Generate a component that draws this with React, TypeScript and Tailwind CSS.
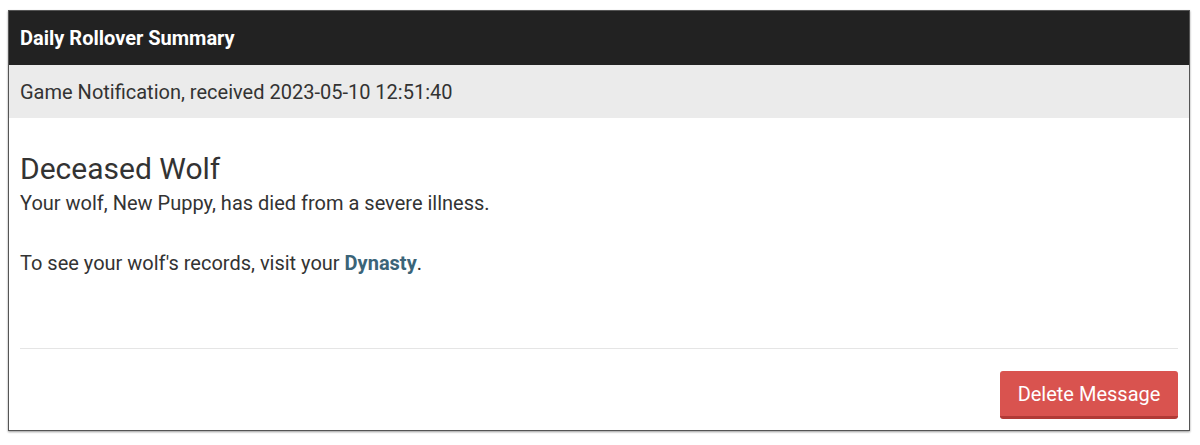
export default function App() {
  return (
    <div className="bg-white w-[1200px] h-[445px] pt-[10px] pl-[8px]" style={{ fontFamily: "Roboto, 'Liberation Sans', sans-serif" }}>
      <div className="w-[1182px] border border-[#555] shadow-[0_1px_2px_rgba(0,0,0,0.4)]">
        <div className="bg-[#222] h-[54px] flex items-center px-[11px] text-white font-bold text-[20px]">Daily Rollover Summary</div>
        <div className="bg-[#ebebeb] h-[53px] flex items-center px-[11px] text-[#333] text-[20px]">Game Notification, received 2023-05-10 12:51:40</div>
        <div className="px-[11px] pt-[33px] text-[#333]">
          <h1 className="text-[30px] leading-[36px]">Deceased Wolf</h1>
          <p className="text-[20px] leading-[28px] mt-[2px]">Your wolf, New Puppy, has died from a severe illness.</p>
          <p className="text-[20px] leading-[28px] mt-[32px]">To see your wolf's records, visit your <a className="font-bold text-[#3b6478]">Dynasty</a>.</p>
          <div className="mt-[71px] border-t border-[#e5e5e5]" />
          <div className="flex justify-end pt-[22px] pb-[11px]">
            <button className="w-[178px] h-[48px] rounded-[3px] bg-[#d9534f] border-b-[3px] border-[#b13a36] text-white text-[20px]">Delete Message</button>
          </div>
        </div>
      </div>
    </div>
  );
}
